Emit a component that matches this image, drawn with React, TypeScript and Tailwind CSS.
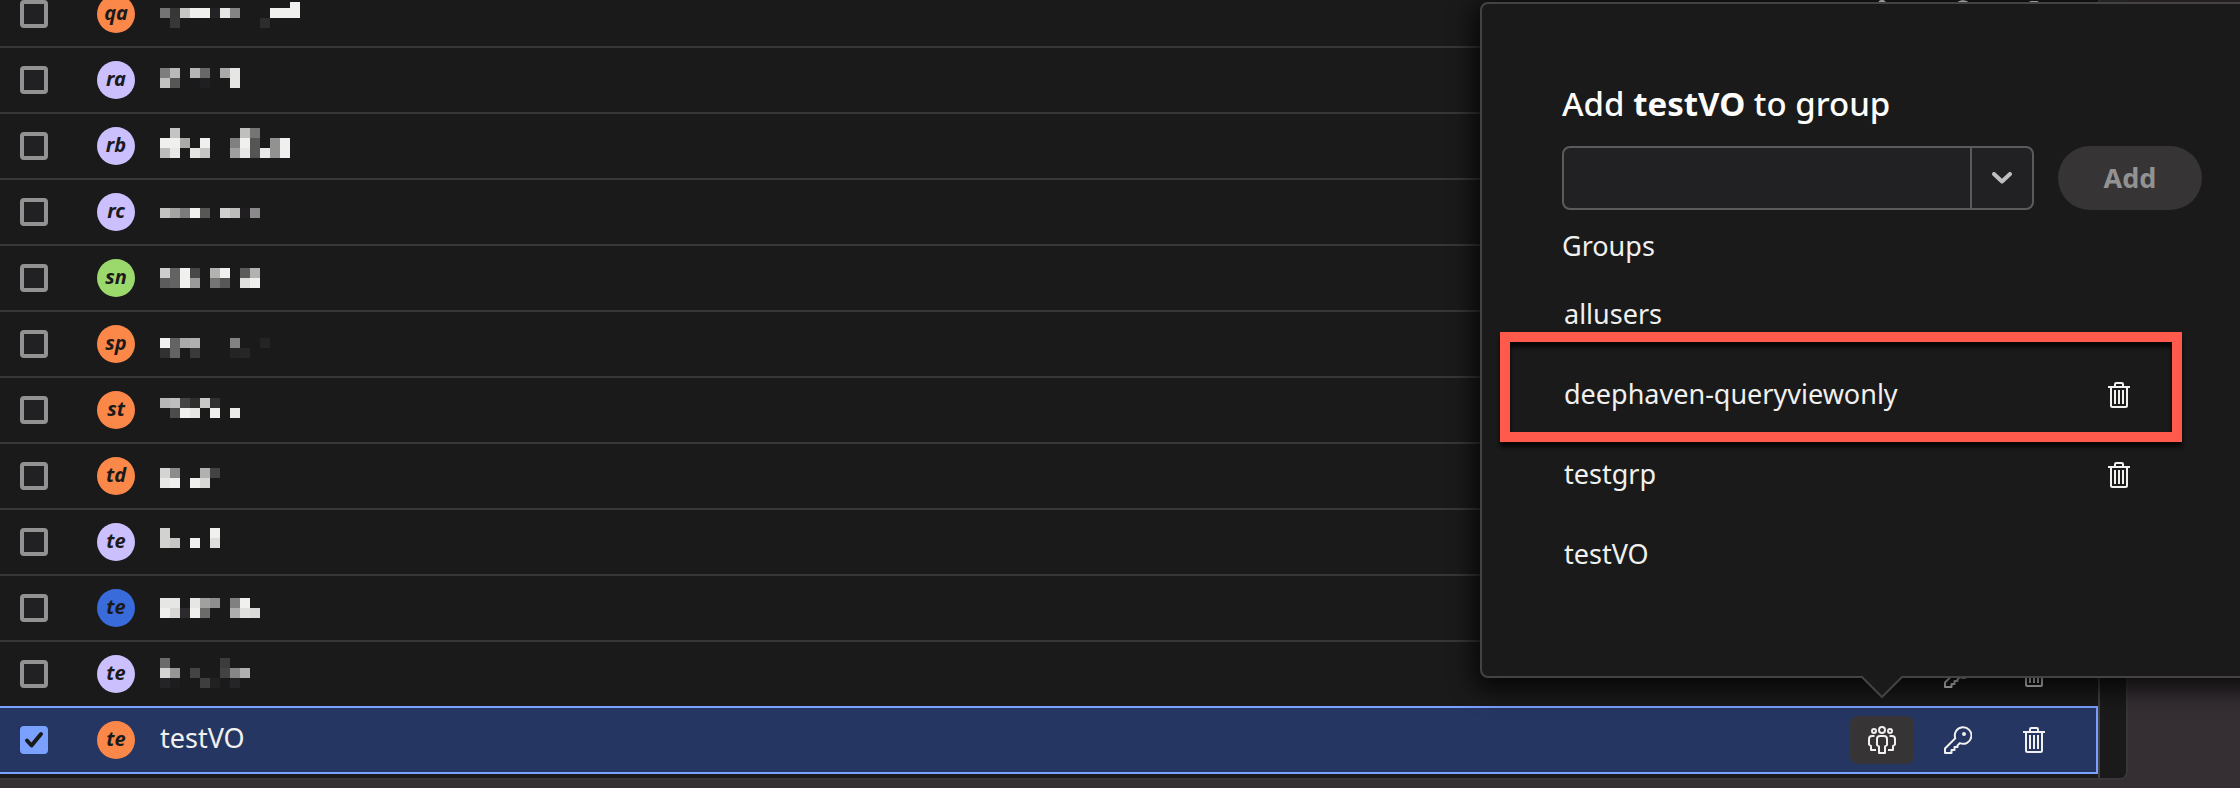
import React, { useState } from 'react';

type Cell = [x: number, y: number, shade: string];

interface User {
  id: string;
  initials: string;
  color: string;
  name?: string;
  cells?: Cell[];
}

const ORANGE = 'bg-[#fb8749]';
const LILAC = 'bg-[#cbbffe]';
const GREEN = 'bg-[#9cd96c]';
const BLUE = 'bg-[#396bdb]';

// Redacted names are kept as blocks of 10px, y counted from the top of the row.
const USERS: User[] = [
  {
    id: 'qa',
    initials: 'qa',
    color: ORANGE,
    cells: [
      [0, 26, '#757575'], [10, 26, '#373737'], [10, 36, '#373737'], [20, 26, '#c6c6c4'], [30, 26, '#f0f0ee'],
      [40, 26, '#f0f0ee'], [50, 26, '#232325'], [60, 26, '#e6e6e4'], [70, 26, '#858585'], [100, 36, '#2d2b2e'],
      [110, 26, '#f0f0ee'], [120, 26, '#f0f0ee'], [130, 20, '#f0f0ee'], [130, 26, '#f0f0ee'],
    ],
  },
  {
    id: 'ra',
    initials: 'ra',
    color: LILAC,
    cells: [
      [0, 20, '#7d7d7d'], [10, 20, '#b9b9b7'], [0, 30, '#c2c2c0'], [10, 30, '#565656'], [30, 20, '#b5b5b3'],
      [40, 20, '#686868'], [40, 30, '#1f1e20'], [60, 20, '#aaaaaa'], [70, 20, '#e6e6e4'], [70, 30, '#e6e6e4'],
    ],
  },
  {
    id: 'rb',
    initials: 'rb',
    color: LILAC,
    cells: [
      [10, 14, '#c4c4c2'], [0, 24, '#f0f0ee'], [10, 24, '#f0f0ee'], [20, 24, '#a9a9a7'], [40, 24, '#f0f0ee'],
      [0, 34, '#bcbcba'], [10, 34, '#e8e8e6'], [30, 34, '#e4e4e2'], [40, 34, '#c6c6c4'], [80, 14, '#bfbfbd'],
      [90, 14, '#757575'], [70, 24, '#808080'], [80, 24, '#f0f0ee'], [90, 24, '#555555'], [110, 24, '#929292'],
      [120, 24, '#f0f0ee'], [70, 34, '#a0a0a0'], [80, 34, '#e8e8e6'], [90, 34, '#555555'], [100, 34, '#e8e8e6'],
      [110, 34, '#929292'], [120, 34, '#f0f0ee'],
    ],
  },
  {
    id: 'rc',
    initials: 'rc',
    color: LILAC,
    cells: [
      [0, 28, '#c3c3c1'], [10, 28, '#a4a4a2'], [20, 28, '#7c7c7c'], [30, 28, '#f0f0ee'], [40, 28, '#575757'],
      [60, 28, '#d0d0ce'], [70, 28, '#bdbdbb'], [80, 28, '#201e21'], [90, 28, '#8a8a8a'],
    ],
  },
  {
    id: 'sn',
    initials: 'sn',
    color: GREEN,
    cells: [
      [0, 22, '#cdcdcb'], [10, 22, '#636363'], [20, 22, '#f0f0ee'], [30, 22, '#474747'], [50, 22, '#b2b2b0'],
      [60, 22, '#f0f0ee'], [80, 22, '#5c5c5c'], [90, 22, '#b2b2b0'], [0, 32, '#5c5c5c'], [10, 32, '#636363'],
      [20, 32, '#f0f0ee'], [30, 32, '#9a9a9a'], [50, 32, '#757575'], [60, 32, '#575757'], [80, 32, '#e0e0de'],
      [90, 32, '#f0f0ee'],
    ],
  },
  {
    id: 'sp',
    initials: 'sp',
    color: ORANGE,
    cells: [
      [0, 26, '#f0f0ee'], [10, 26, '#636363'], [20, 26, '#aaaaaa'], [30, 26, '#b0b0ae'], [0, 36, '#313132'],
      [10, 36, '#636363'], [30, 36, '#3a3a3b'], [70, 26, '#828282'], [100, 26, '#242426'], [70, 36, '#252326'],
      [80, 36, '#262527'],
    ],
  },
  {
    id: 'st',
    initials: 'st',
    color: ORANGE,
    cells: [
      [0, 20, '#b6b6b6'], [10, 20, '#bfbfbd'], [20, 20, '#444444'], [30, 20, '#2e2e2f'], [40, 20, '#c8c8c6'],
      [50, 20, '#313132'], [10, 30, '#4c4c4c'], [20, 30, '#f0f0ee'], [30, 30, '#e6e6e4'], [50, 30, '#f0f0ee'],
      [70, 30, '#ebebe9'],
    ],
  },
  {
    id: 'td',
    initials: 'td',
    color: ORANGE,
    cells: [
      [0, 24, '#d4d4d2'], [10, 24, '#8c8c8c'], [0, 34, '#e8e8e6'], [10, 34, '#f0f0ee'], [30, 34, '#f0f0ee'],
      [40, 24, '#b1b1af'], [50, 24, '#434344'], [40, 34, '#d7d7d5'],
    ],
  },
  {
    id: 'te-1',
    initials: 'te',
    color: LILAC,
    cells: [
      [0, 18, '#d2d2d0'], [0, 28, '#d2d2d0'], [10, 28, '#c6c6c4'], [30, 28, '#f0f0ee'], [50, 18, '#f0f0ee'],
      [50, 28, '#dededc'],
    ],
  },
  {
    id: 'te-2',
    initials: 'te',
    color: BLUE,
    cells: [
      [0, 22, '#e6e6e4'], [10, 22, '#e6e6e4'], [0, 32, '#f0f0ee'], [10, 32, '#d7d7d5'], [20, 32, '#2c2a2d'],
      [30, 22, '#e6e6e4'], [30, 32, '#f0f0ee'], [40, 22, '#a0a0a0'], [50, 22, '#8e8e8e'], [40, 32, '#6b6b6b'],
      [70, 22, '#808080'], [80, 22, '#f0f0ee'], [70, 32, '#aeaeae'], [80, 32, '#e0e0de'], [90, 32, '#dadad8'],
    ],
  },
  {
    id: 'te-3',
    initials: 'te',
    color: LILAC,
    cells: [
      [0, 16, '#6b6b6b'], [0, 26, '#d4d4d2'], [10, 26, '#969696'], [0, 36, '#242426'], [10, 36, '#1d1c1e'],
      [30, 26, '#444445'], [40, 36, '#3e3e3f'], [50, 36, '#212122'], [60, 16, '#3c3c3d'], [60, 26, '#434344'],
      [70, 26, '#878787'], [80, 26, '#b0b0ae'], [70, 36, '#252527'],
    ],
  },
  { id: 'te-4', initials: 'te', color: ORANGE, name: 'testVO' },
];

interface Group {
  name: string;
  removable?: boolean;
  highlighted?: boolean;
}

const GROUPS: Group[] = [
  { name: 'allusers' },
  { name: 'deephaven-queryviewonly', removable: true, highlighted: true },
  { name: 'testgrp', removable: true },
  { name: 'testVO' },
];

const TrashIcon = () => (
  <svg className="h-[26px] w-[22px]" viewBox="0 0 22 26" fill="none" stroke="currentColor" strokeWidth="2">
    <path d="M7 5V2.2Q7 1 8.2 1H13.8Q15 1 15 2.2V5M0 5H22M3 5V23.5Q3 25 4.5 25H17.5Q19 25 19 23.5V5" />
    <path d="M7 8V22M11 8V22M15 8V22" />
  </svg>
);

const KeyIcon = () => (
  <svg className="size-7" viewBox="0 0 28 28" fill="none" stroke="currentColor" strokeWidth="2" strokeLinejoin="round">
    <path d="M11.3 12.3A8.3 8.3 0 1 1 15.8 17.1L13.5 19.5V21H10.5V24H7.5V27H1V22.5Z" />
    <circle cx="20" cy="8" r="2" fill="currentColor" stroke="none" />
  </svg>
);

const PeopleIcon = () => (
  <svg className="size-7" viewBox="0 0 28 28" fill="none" stroke="currentColor" strokeWidth="2" strokeLinejoin="round">
    <circle cx="14" cy="4" r="3" />
    <circle cx="6" cy="5" r="2" />
    <circle cx="22" cy="5" r="2" />
    <path d="M12 10H16Q19 10 19 13V19L17 20.5V27H11V20.5L9 19V13Q9 10 12 10Z" />
    <path d="M6.5 10H4Q1 10 1 13V18.5L3 20V24H8M21.5 10H24Q27 10 27 13V18.5L25 20V24H20" />
  </svg>
);

interface UserRowProps {
  user: User;
  selected: boolean;
  onToggle: () => void;
}

const UserRow: React.FC<UserRowProps> = ({ user, selected, onToggle }) => {
  const iconButton = 'flex h-12 w-16 items-center justify-center rounded-lg cursor-pointer';
  return (
    <tr
      className={
        selected
          ? 'h-16 bg-[#263663] outline-2 outline-[#7aa1ff]'
          : 'h-[66px] *:border-b-2 *:border-[#373638]'
      }
    >
      <td className="w-[97px] pl-5">
        <label className="relative block size-7">
          <input
            type="checkbox"
            checked={selected}
            onChange={onToggle}
            aria-label={`Select ${user.name ?? user.initials}`}
            className="block size-7 appearance-none rounded-sm border-4 border-[#929292] bg-[#212123] checked:border-[#7aa1ff] checked:bg-[#7aa1ff]"
          />
          {selected && (
            <svg className="pointer-events-none absolute inset-0 size-7" viewBox="0 0 28 28" fill="none">
              <path d="M7 14.5L11.5 19.5L21 8" stroke="#1a1a1b" strokeWidth="4" strokeLinecap="round" strokeLinejoin="round" />
            </svg>
          )}
        </label>
      </td>
      <td className="w-[63px]">
        <div
          className={`flex size-[38px] items-center justify-center rounded-full pb-0.5 text-xl leading-none font-bold text-[#1a1a1b] italic ${user.color}`}
        >
          {user.initials}
        </div>
      </td>
      <td>
        {user.name ? (
          <div className="pb-1">{user.name}</div>
        ) : (
          <svg className="block h-16 w-40" viewBox="0 0 160 64" shapeRendering="crispEdges" aria-hidden="true">
            {user.cells?.map(([x, y, shade]) => (
              <rect key={`${x}-${y}`} x={x} y={y} width="10" height="10" fill={shade} />
            ))}
          </svg>
        )}
      </td>
      <td className="pr-[30px]">
        <div className="flex justify-end gap-3">
          <button className={selected ? `${iconButton} bg-[#373436]` : iconButton} aria-label="Groups">
            <PeopleIcon />
          </button>
          <button className={iconButton} aria-label="Set password">
            <KeyIcon />
          </button>
          <button className={iconButton} aria-label="Delete user">
            <TrashIcon />
          </button>
        </div>
      </td>
    </tr>
  );
};

const GroupPopover: React.FC = () => {
  const [value, setValue] = useState('');

  return (
    <div
      role="dialog"
      aria-labelledby="group-title"
      className="absolute top-0.5 -right-11 w-[804px] rounded-lg border-2 border-[#454244] bg-[#1a1a1b] px-20 pt-[78px] pb-20 shadow-[0_6px_24px_6px_rgba(0,0,0,0.75)]"
    >
      <h2 id="group-title" className="text-[33px] leading-[44px] font-medium text-[#fcfcfa]">
        Add <strong className="font-bold">testVO</strong> to group
      </h2>
      <div className="mt-5 flex gap-6">
        <div className="flex h-16 min-w-0 flex-1 rounded-lg border-2 border-[#5b5a5c] bg-[#212123]">
          <input
            type="text"
            value={value}
            onChange={(e) => setValue(e.target.value)}
            aria-label="Group"
            className="min-w-0 flex-1 bg-transparent px-4 outline-none"
          />
          <button
            className="flex w-[62px] shrink-0 items-center justify-center border-l-2 border-[#5b5a5c] text-[#c0bfbf]"
            aria-label="Show groups"
          >
            <svg className="h-3 w-5" viewBox="0 0 20 12" fill="none">
              <path d="M2 2L10 9.5L18 2" stroke="currentColor" strokeWidth="4" strokeLinecap="round" strokeLinejoin="round" />
            </svg>
          </button>
        </div>
        <button disabled className="h-16 w-36 shrink-0 rounded-full bg-[#373436] font-bold text-[#929292]">
          Add
        </button>
      </div>
      <h3 className="mt-4 leading-10">Groups</h3>
      <ul className="mt-2.5 pl-0.5">
        {GROUPS.map((group) => (
          <li key={group.name} className="relative flex h-20 items-center justify-between pr-[72px]">
            <span className="pb-1">{group.name}</span>
            {group.removable && (
              <button aria-label={`Remove ${group.name}`} className="cursor-pointer pb-0.5">
                <TrashIcon />
              </button>
            )}
            {group.highlighted && (
              <div className="pointer-events-none absolute -top-6 right-5 -bottom-1.5 -left-16 border-10 border-[#ff5a4b] drop-shadow-[0_5px_2px_rgba(0,0,0,0.75)]" />
            )}
          </li>
        ))}
      </ul>
      <svg className="absolute top-full left-[378px] h-6 w-11" viewBox="0 0 44 24">
        <path d="M0 -2H44V0H42L22 21L2 0H0Z" fill="#1a1a1b" />
        <path d="M1 0L22 21L43 0" fill="none" stroke="#454244" strokeWidth="2" />
      </svg>
    </div>
  );
};

export default function App() {
  const [selected, setSelected] = useState('te-4');

  return (
    <main className="relative min-h-screen overflow-hidden bg-[#352f33] font-['Noto_Sans',sans-serif] text-[27px] leading-9 text-[#f0f0ee]">
      <div className="-mt-[18px] mr-28 flex overflow-hidden rounded-br-lg border-r-2 border-b-2 border-[#373638] bg-[#1a1a1b]">
        <div className="flex-1 border-r-2 border-[#424043] pr-0.5 pb-1.5">
          <table className="w-full border-separate border-spacing-0">
            <tbody>
              {USERS.map((user) => (
                <UserRow
                  key={user.id}
                  user={user}
                  selected={user.id === selected}
                  onToggle={() => setSelected(user.id === selected ? '' : user.id)}
                />
              ))}
            </tbody>
          </table>
        </div>
        <div className="w-[26px]">
          <div className="h-40 bg-[#373638]" />
        </div>
      </div>
      <GroupPopover />
    </main>
  );
}
